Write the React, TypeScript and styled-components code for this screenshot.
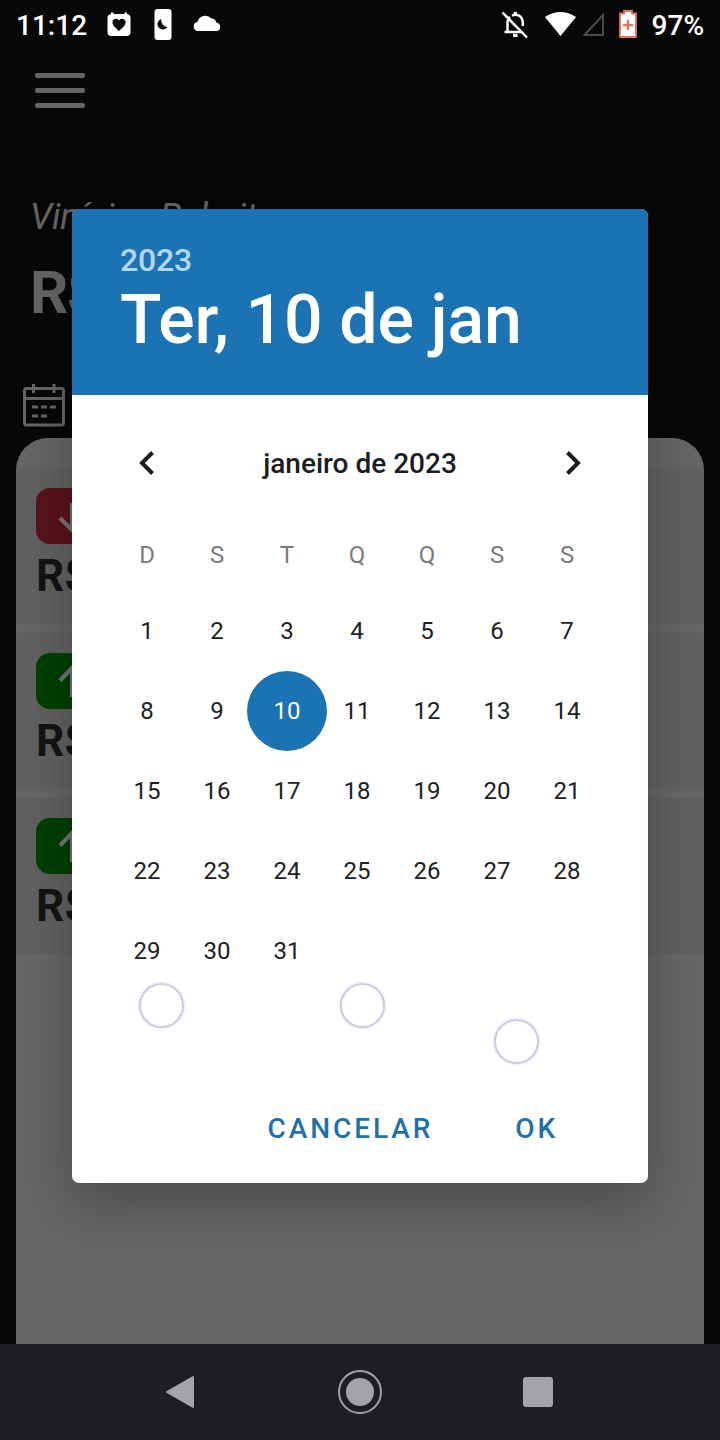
import React from "react";
import styled, { createGlobalStyle } from "styled-components";

const GlobalStyle = createGlobalStyle`
  *, *::before, *::after { box-sizing: border-box; }
  body { margin: 0; background: #080808; font-family: Roboto, sans-serif; }
  button { font: inherit; letter-spacing: inherit; color: inherit; background: none; border: 0; padding: 0; cursor: pointer; }
`;

const Screen = styled.div`
  position: relative;
  width: 720px;
  height: 1440px;
  display: flex;
  flex-direction: column;
  overflow: hidden;
  background: #080808;
`;

const StatusBar = styled.header`
  display: flex;
  justify-content: space-between;
  height: 48px;
  padding: 0 16px;
  color: #fff;
  font-size: 28px;
  font-weight: 500;
  line-height: 51px;
`;

const StatusGroup = styled.div`
  display: flex;
  align-items: flex-start;
`;

const StatusIcon = styled.svg<{ $gap: number }>`
  display: block;
  flex: none;
  margin-left: ${(p) => p.$gap}px;
`;

const Percent = styled.span`
  margin-left: 15px;
`;

const MenuButton = styled.button`
  display: flex;
  flex-direction: column;
  gap: 10px;
  width: 50px;
  margin: 25px 0 0 35px;
`;

const MenuLine = styled.span`
  height: 5px;
  border-radius: 2px;
  background: #666;
`;

const Account = styled.section`
  display: flex;
  flex-direction: column;
  height: 330px;
  padding: 88px 0 0 30px;
  color: #666;
`;

const UserName = styled.div`
  font-size: 36px;
  font-style: italic;
  line-height: 42px;
  letter-spacing: -0.2px;
  white-space: nowrap;
`;

const Balance = styled.div`
  margin-top: 20px;
  font-size: 60px;
  font-weight: 700;
  line-height: 70px;
  letter-spacing: -2px;
`;

const CalendarIcon = styled.svg`
  display: block;
  margin: 56px 0 0 -8px;
`;

const Sheet = styled.main`
  flex: 1;
  margin: 0 16px;
  padding-top: 30px;
  border-radius: 32px 32px 0 0;
  background: #666;
`;

const Entry = styled.article`
  height: 156px;
  margin-bottom: 9px;
  padding: 20px 20px 0;
  background: #616161;
`;

const EntryBadge = styled.div<{ $color: string }>`
  display: flex;
  align-items: center;
  width: 96px;
  height: 56px;
  padding-left: 20px;
  border-radius: 14px;
  background: ${(p) => p.$color};
`;

const EntryValue = styled.div`
  margin-top: 6px;
  color: #141414;
  font-size: 44px;
  font-weight: 700;
  line-height: 52px;
`;

const NavBar = styled.nav`
  display: flex;
  align-items: center;
  justify-content: space-between;
  height: 96px;
  padding: 0 167px 0 165px;
  background: #1e1f23;
`;

const NavIcon = styled.svg`
  display: block;
`;

const Dialog = styled.div`
  position: absolute;
  top: 209px;
  left: 72px;
  width: 576px;
  height: 974px;
  display: flex;
  flex-direction: column;
  border-radius: 7px;
  background: #fff;
  box-shadow: 0 20px 56px rgba(0, 0, 0, 0.27);
`;

const DialogHeader = styled.div`
  height: 186px;
  padding: 32px 48px 0;
  border-radius: 7px 7px 0 0;
  background: #1c73b4;
  color: #fff;
  font-weight: 500;
`;

const Year = styled.div`
  color: #b2d7f2;
  font-size: 32px;
  line-height: 38px;
  letter-spacing: -0.2px;
`;

const SelectedDate = styled.div`
  margin-top: 1px;
  font-size: 68px;
  line-height: 80px;
  letter-spacing: -0.13px;
  white-space: nowrap;
`;

const MonthBar = styled.div`
  display: flex;
  align-items: center;
  justify-content: space-between;
  height: 40px;
  margin: 48px 65px 0;
  color: #1d1d1f;
  font-size: 28px;
  font-weight: 500;
`;

const Chevron = styled.svg`
  display: block;
`;

const Grid = styled.div`
  display: grid;
  grid-template-columns: repeat(7, 70px);
  margin: 32px 0 0 40px;
  font-size: 24px;
  color: #212121;
`;

const Weekday = styled.div`
  height: 76px;
  line-height: 81px;
  text-align: center;
  color: #7a7a7a;
`;

const Day = styled.button<{ $selected: boolean }>`
  justify-self: center;
  width: 80px;
  height: 80px;
  margin: 0 -5px;
  border-radius: 50%;
  line-height: 80px;
  text-align: center;
  font-size: 24px;
  background: ${(p) => (p.$selected ? "#1c73b4" : "transparent")};
  color: ${(p) => (p.$selected ? "#fff" : "#212121")};
`;

const TouchPoint = styled.span<{ $x: number; $y: number }>`
  position: absolute;
  left: ${(p) => p.$x}px;
  top: ${(p) => p.$y}px;
  width: 45px;
  height: 45px;
  border: 2px solid #cccbe3;
  border-radius: 50%;
  box-shadow: 0 0 2px 1px #e8e7f7;
`;

const Actions = styled.div`
  display: flex;
  justify-content: flex-end;
  gap: 82px;
  margin: auto 90px 35px 0;
  color: #1f70ad;
  font-size: 28px;
  font-weight: 500;
  line-height: 38px;
  letter-spacing: 2.9px;
`;

const entries = [
  { income: false, value: "R$" },
  { income: true, value: "R$" },
  { income: true, value: "R$" },
];
const weekdays = ["D", "S", "T", "Q", "Q", "S", "S"];
const days = Array.from({ length: 31 }, (_, i) => i + 1);
const touches = [
  { x: 67, y: 774 },
  { x: 268, y: 774 },
  { x: 422, y: 810 },
];

export default function App() {
  return (
    <Screen>
      <GlobalStyle />
      <StatusBar>
        <StatusGroup>
          <span>11:12</span>
          <StatusIcon $gap={19} width="26" height="48" viewBox="0 0 26 48" fill="#fff">
            <path d="M5 14V12.500h2.500V14h11V12.500H21V14a4 4 0 0 1 3.500 4v14a4 4 0 0 1-4 4h-15a4 4 0 0 1-4-4V18A4 4 0 0 1 5 14Z" />
            <path fill="#080808" d="M13 31C9 27.500 6.500 25.500 6.500 22.600A3.500 3.500 0 0 1 13 20.600a3.500 3.500 0 0 1 6.500 2C19.500 25.500 17 27.500 13 31Z" />
          </StatusIcon>
          <StatusIcon $gap={22} width="18" height="48" viewBox="0 0 18 48">
            <rect x="0.500" y="9" width="17" height="31" rx="3" fill="#fff" />
            <path d="M7.300 19A5.400 5.400 0 1 0 13.500 27A6.800 6.800 0 0 1 7.300 19Z" fill="#080808" />
          </StatusIcon>
          <StatusIcon $gap={21} width="30" height="48" viewBox="0 0 30 48" fill="#fff">
            <path d="M5 31a4.600 4.600 0 0 1-.6-9.100A8.200 8.200 0 0 1 18.500 18.600a5.500 5.500 0 0 1 4.800 3.800A4.400 4.400 0 0 1 24 31Z" />
          </StatusIcon>
        </StatusGroup>
        <StatusGroup>
          <StatusIcon $gap={0} width="30" height="48" viewBox="0 0 30 48" fill="none" stroke="#fff" strokeWidth="2.500">
            <path d="M6.500 32V22.500Q6.500 19 9 17M11 15.600Q14 14 17.500 15.400Q21.800 17.500 21.800 23V26M3.500 32H20" />
            <path d="M14.300 12V15M12 35.300h4.500" strokeWidth="3.200" />
            <path d="M1.500 12.500L26 37.500" />
          </StatusIcon>
          <StatusIcon $gap={14} width="32" height="48" viewBox="0 0 32 48" fill="#fff">
            <path d="M0 17Q15.500 7 31 17L15.500 36Z" />
          </StatusIcon>
          <StatusIcon $gap={5} width="24" height="48" viewBox="0 0 24 48" fill="none" stroke="#4b4b4b" strokeWidth="2">
            <path d="M2.500 35H21V15Z" />
          </StatusIcon>
          <StatusIcon $gap={13} width="18" height="48" viewBox="0 0 18 48">
            <path d="M1 13.500H5V11H13V13.500H17V37H1Z" fill="#fff" stroke="#e6725a" strokeWidth="1.800" />
            <path d="M9 20V30M4 25H14" stroke="#e6725a" strokeWidth="2.300" />
          </StatusIcon>
          <Percent>97%</Percent>
        </StatusGroup>
      </StatusBar>

      <MenuButton aria-label="Menu">
        <MenuLine />
        <MenuLine />
        <MenuLine />
      </MenuButton>

      <Account>
        <UserName>Vinícius Rabeito</UserName>
        <Balance>R$</Balance>
        <CalendarIcon width="44" height="44" viewBox="0 0 44 44" fill="none" stroke="#666" strokeWidth="3">
          <rect x="2.500" y="4.500" width="39" height="36.500" rx="2" />
          <path d="M2.500 14.500H41.500M11.500 0V9M32 0V9M10 23h6M19 23h6M28 23h6M10 32h6M19 32h6" />
        </CalendarIcon>
      </Account>

      <Sheet>
        {entries.map((entry, i) => (
          <Entry key={i}>
            <EntryBadge $color={entry.income ? "#004000" : "#58141b"}>
              <svg width="32" height="32" viewBox="0 0 32 32" fill="none" stroke="#757575" strokeWidth="4">
                <path d={entry.income ? "M16 32V3M4 15.500L16 3L28 15.500" : "M16 3V30M4 18L16 30L28 18"} />
              </svg>
            </EntryBadge>
            <EntryValue>{entry.value}</EntryValue>
          </Entry>
        ))}
      </Sheet>

      <NavBar>
        <NavIcon width="32" height="44" viewBox="0 0 32 44">
          <path d="M2 22L28 7V37Z" fill="#a3a4a8" stroke="#a3a4a8" strokeWidth="2" strokeLinejoin="round" />
        </NavIcon>
        <NavIcon width="44" height="44" viewBox="0 0 44 44">
          <circle cx="22" cy="22" r="21" fill="none" stroke="#a3a4a8" strokeWidth="2" />
          <circle cx="22" cy="22" r="14" fill="#a3a4a8" />
        </NavIcon>
        <NavIcon width="30" height="30" viewBox="0 0 30 30">
          <rect width="30" height="30" rx="3" fill="#a3a4a8" />
        </NavIcon>
      </NavBar>

      <Dialog role="dialog">
        <DialogHeader>
          <Year>2023</Year>
          <SelectedDate>Ter, 10 de jan</SelectedDate>
        </DialogHeader>
        <MonthBar>
          <Chevron width="20" height="24" viewBox="0 0 20 24" fill="none" stroke="#1d1d1f" strokeWidth="4">
            <path d="M15.500 1.500L5 12L15.500 22.500" />
          </Chevron>
          <span>janeiro de 2023</span>
          <Chevron width="20" height="24" viewBox="0 0 20 24" fill="none" stroke="#1d1d1f" strokeWidth="4">
            <path d="M4.500 1.500L15 12L4.500 22.500" />
          </Chevron>
        </MonthBar>
        <Grid>
          {weekdays.map((d, i) => (
            <Weekday key={i}>{d}</Weekday>
          ))}
          {days.map((d) => (
            <Day key={d} $selected={d === 10}>
              {d}
            </Day>
          ))}
        </Grid>
        <Actions>
          <button>CANCELAR</button>
          <button>OK</button>
        </Actions>
        {touches.map((t) => (
          <TouchPoint key={t.x} $x={t.x} $y={t.y} />
        ))}
      </Dialog>
    </Screen>
  );
}
